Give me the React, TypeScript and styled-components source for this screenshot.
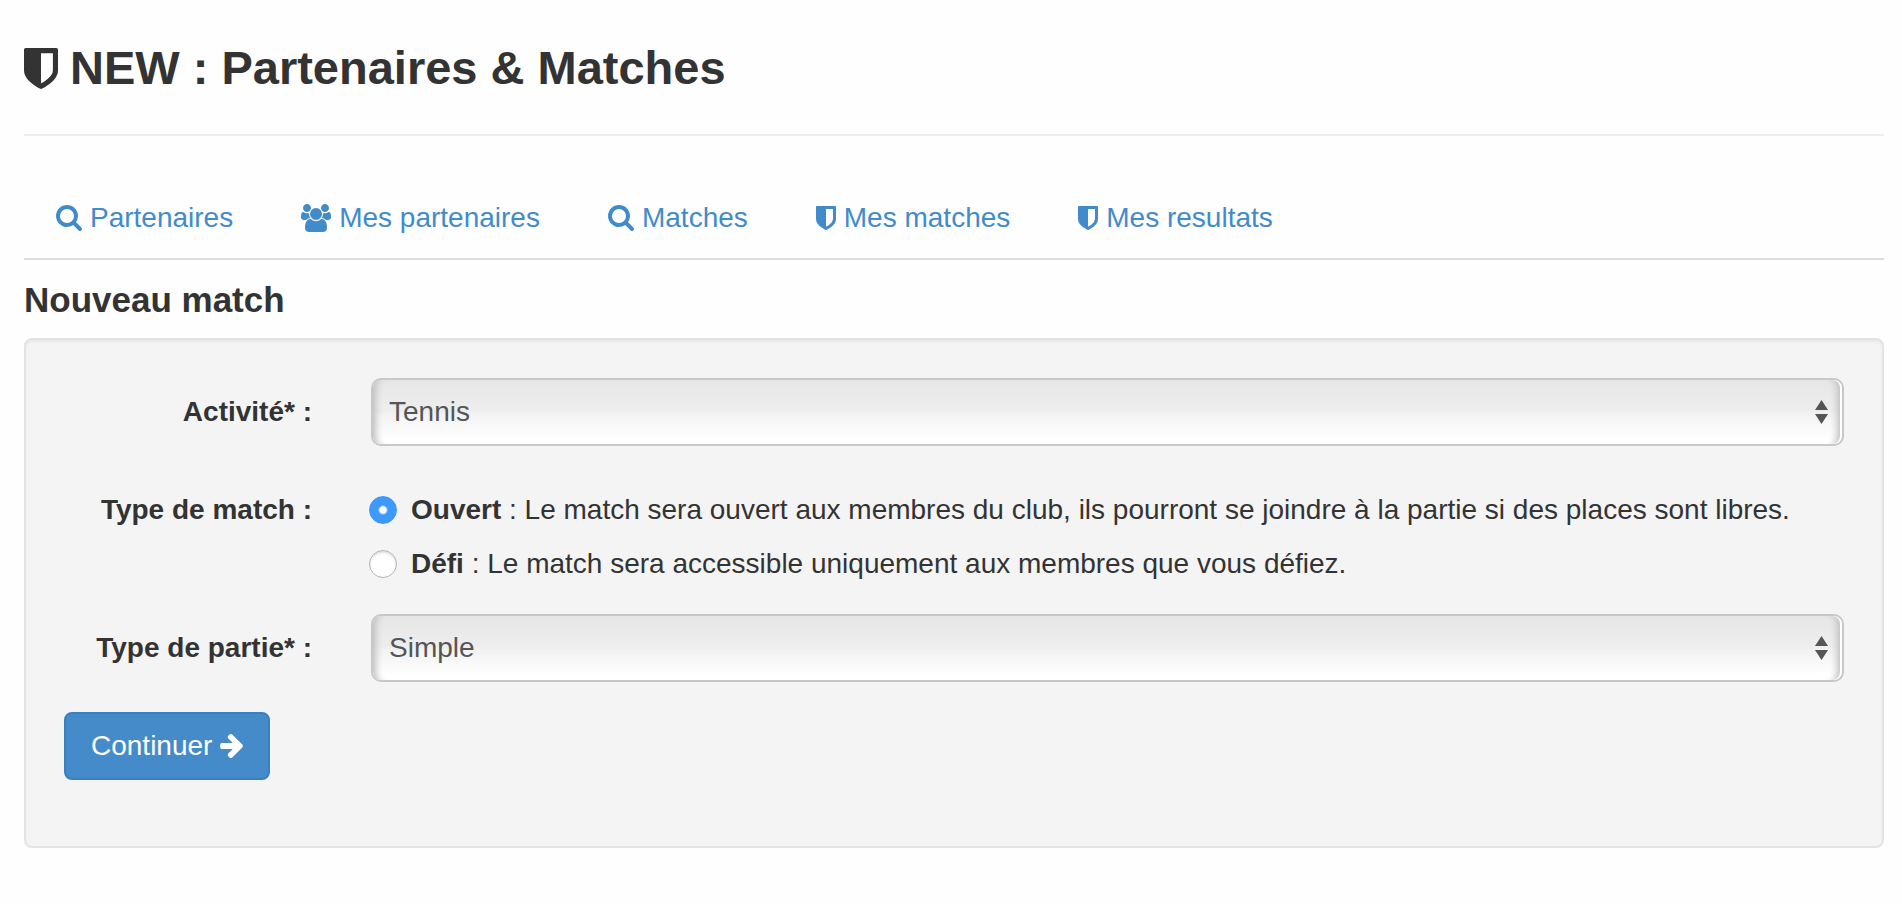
import React, { useState } from 'react';
import styled, { createGlobalStyle } from 'styled-components';

const GlobalStyle = createGlobalStyle`
  *, *::before, *::after { box-sizing: border-box; }
  body {
    margin: 0;
    background: #fefefe;
    color: #333;
    font-family: "Helvetica Neue", "Liberation Sans", Arial, sans-serif;
    font-size: 28px;
    line-height: 40px;
  }
`;

const Page = styled.main`
  padding: 40px 18px 56px 24px;
`;

const PageHeader = styled.header`
  padding-bottom: 38px;
  border-bottom: 2px solid #eee;
`;

const Title = styled.h1`
  display: flex;
  align-items: center;
  gap: 12px;
  margin: 0;
  font-size: 47px;
  font-weight: 700;
  line-height: 56px;
`;

const Tabs = styled.nav`
  display: flex;
  flex-wrap: wrap;
  gap: 4px;
  margin-top: 40px;
  border-bottom: 2px solid #ddd;
`;

const TabLink = styled.a`
  display: flex;
  align-items: center;
  gap: 8px;
  padding: 22px 32px 20px;
  color: #428bca;
  text-decoration: none;
`;

const Icon = styled.svg<{ $w: number; $h: number }>`
  flex: none;
  display: block;
  width: ${(p) => p.$w}px;
  height: ${(p) => p.$h}px;
  fill: currentColor;
`;

const SectionTitle = styled.h2`
  margin: 20px 0 18px;
  font-size: 35px;
  font-weight: 700;
  line-height: 40px;
`;

const Well = styled.form`
  padding: 38px 38px 66px;
  border: 2px solid #e3e3e3;
  border-radius: 8px;
  background: #f4f4f4;
  box-shadow: inset 0 2px 2px rgba(0, 0, 0, 0.05);
`;

const Row = styled.div`
  display: grid;
  grid-template-columns: 248px minmax(0, 1fr);
  column-gap: 59px;
  align-items: start;
  margin-bottom: 30px;
`;

const RowLabel = styled.label`
  padding: 14px 0;
  text-align: right;
  font-weight: 700;
`;

const RadioGroup = styled.div`
  display: flex;
  flex-direction: column;
  gap: 14px;
  margin-left: -2px;
  padding-top: 14px;
`;

const SelectFrame = styled.div`
  position: relative;
  height: 68px;
  padding-right: 2px;
  border: 2px solid #c8c8c8;
  border-radius: 10px;
  background: #fff;
`;

const SelectBox = styled.select`
  display: block;
  width: 100%;
  height: 100%;
  padding: 0 48px 0 16px;
  border: 0;
  border-radius: 8px;
  appearance: none;
  background: linear-gradient(#e6e6e6, #eee 50%, #f2f2f2 52%, #fff 92%);
  box-shadow: inset 10px 0 7px -7px #c0c0c0, inset -10px 0 7px -7px #c0c0c0;
  color: #555;
  font: inherit;
`;

const SelectArrows = styled.svg`
  position: absolute;
  top: 20px;
  right: 14px;
  width: 13px;
  height: 24px;
  fill: #555;
  pointer-events: none;
`;

const Option = styled.label`
  display: flex;
  align-items: center;
  gap: 14px;
`;

const Radio = styled.input`
  flex: none;
  width: 28px;
  height: 28px;
  margin: 0;
  appearance: none;
  border: 1px solid #b4b4b4;
  border-radius: 50%;
  background: #fff;
  box-shadow: inset 0 2px 2px rgba(0, 0, 0, 0.12);

  &:checked {
    border-color: #3b99fc;
    background: radial-gradient(circle, #fff 3px, #3f99fb 5px);
    box-shadow: none;
  }
`;

const SubmitButton = styled.button`
  display: flex;
  align-items: center;
  gap: 8px;
  height: 68px;
  padding: 0 25px;
  border: 2px solid #3a80be;
  border-radius: 8px;
  background: #458bc9;
  color: #fff;
  font: inherit;
`;

const SearchIcon = () => (
  <Icon $w={26} $h={26} viewBox="64 128 1664 1664" aria-hidden="true">
    <path d="M1216 832q0-185-131.5-316.5t-316.5-131.5-316.5 131.5-131.5 316.5 131.5 316.5 316.5 131.5 316.5-131.5 131.5-316.5zm512 832q0 52-38 90t-90 38q-54 0-90-38l-343-342q-179 124-399 124-143 0-273.5-55.5t-225-150-150-225-55.5-273.5 55.5-273.5 150-225 225-150 273.5-55.5 273.5 55.5 225 150 150 225 55.5 273.5q0 220-124 399l343 343q37 37 37 90z" />
  </Icon>
);

const ShieldIcon = ({ w = 20, h = 24 }: { w?: number; h?: number }) => (
  <Icon $w={w} $h={h} viewBox="256 128 1280 1536" aria-hidden="true">
    <path d="M1344 960v-640h-448v1137q119-63 213-137 235-184 235-360zm192-768v768q0 86-33.5 170.5t-83 150-118 127.5-126.5 103-121 77.5-89.5 49.5-42.5 20q-12 6-26 6t-26-6q-16-7-42.5-20t-89.5-49.5-121-77.5-126.5-103-118-127.5-83-150-33.5-170.5v-768q0-26 19-45t45-19h1152q26 0 45 19t19 45z" />
  </Icon>
);

const UsersIcon = () => (
  <Icon $w={30} $h={28} viewBox="0 0 1920 1792" aria-hidden="true">
    <path d="M593 896q-162 5-265 128H194q-82 0-138-40.5T0 865q0-353 124-353 6 0 43.5 21t97.5 42.5T384 597q67 0 133-23-5 37-5 66 0 139 81 256zm1071 637q0 120-73 189.5t-194 69.5H523q-121 0-194-69.5T256 1533q0-53 3.5-103.5t14-109T300 1212t43-97.5 62-81 85.5-53.5T602 960q10 0 43 21.5t73 48 107 48 135 21.5 135-21.5 107-48 73-48 43-21.5q61 0 111.5 20t85.5 53.5 62 81 43 97.5 26.5 108.5 14 109 3.5 103.5zM640 256q0 106-75 181t-181 75-181-75-75-181 75-181T384 0t181 75 75 181zm704 384q0 159-112.5 271.5T960 1024 688.5 911.5 576 640t112.5-271.5T960 256t271.5 112.5T1344 640zm576 225q0 78-56 118.5t-138 40.5h-134q-103-123-265-128 81-117 81-256 0-29-5-66 66 23 133 23 59 0 119-21.5t97.5-42.5 43.5-21q124 0 124 353zm-128-609q0 106-75 181t-181 75-181-75-75-181 75-181 181-75 181 75 75 181z" />
  </Icon>
);

const ArrowRightIcon = () => (
  <Icon $w={23} $h={24} viewBox="192 181 1472 1558" aria-hidden="true">
    <path d="M1664 960q0 54-37 91l-651 651q-39 37-91 37-51 0-90-37l-75-75q-38-38-38-91t38-91l293-293H309q-52 0-84.5-37.5T192 1024V896q0-53 32.5-90.5T309 768h704L720 474q-38-36-38-90t38-90l75-75q38-38 90-38 53 0 91 38l651 651q37 35 37 90z" />
  </Icon>
);

const tabs = [
  { label: 'Partenaires', icon: <SearchIcon /> },
  { label: 'Mes partenaires', icon: <UsersIcon /> },
  { label: 'Matches', icon: <SearchIcon /> },
  { label: 'Mes matches', icon: <ShieldIcon /> },
  { label: 'Mes resultats', icon: <ShieldIcon /> },
];

const matchTypes = [
  {
    value: 'ouvert',
    name: 'Ouvert',
    text: 'Le match sera ouvert aux membres du club, ils pourront se joindre à la partie si des places sont libres.',
  },
  {
    value: 'defi',
    name: 'Défi',
    text: 'Le match sera accessible uniquement aux membres que vous défiez.',
  },
];

const SelectRow = ({ id, label, options }: { id: string; label: string; options: string[] }) => (
  <Row>
    <RowLabel htmlFor={id}>{label}</RowLabel>
    <SelectFrame>
      <SelectBox id={id} name={id}>
        {options.map((o) => (
          <option key={o}>{o}</option>
        ))}
      </SelectBox>
      <SelectArrows viewBox="0 0 13 24" aria-hidden="true">
        <path d="M6.500 0L13 10H0zM0 14h13L6.500 24z" />
      </SelectArrows>
    </SelectFrame>
  </Row>
);

export default function App() {
  const [matchType, setMatchType] = useState('ouvert');

  return (
    <>
      <GlobalStyle />
      <Page>
        <PageHeader>
          <Title>
            <ShieldIcon w={34} h={41} />
            NEW : Partenaires &amp; Matches
          </Title>
        </PageHeader>
        <Tabs>
          {tabs.map((t) => (
            <TabLink key={t.label} href="#">
              {t.icon}
              {t.label}
            </TabLink>
          ))}
        </Tabs>
        <SectionTitle>Nouveau match</SectionTitle>
        <Well onSubmit={(e) => e.preventDefault()}>
          <SelectRow id="activite" label="Activité* :" options={['Tennis']} />
          <Row role="radiogroup" aria-labelledby="type-match">
            <RowLabel as="div" id="type-match">Type de match :</RowLabel>
            <RadioGroup>
              {matchTypes.map((m) => (
                <Option key={m.value}>
                  <Radio
                    type="radio"
                    name="type-match"
                    value={m.value}
                    checked={matchType === m.value}
                    onChange={() => setMatchType(m.value)}
                  />
                  <span>
                    <strong>{m.name}</strong> : {m.text}
                  </span>
                </Option>
              ))}
            </RadioGroup>
          </Row>
          <SelectRow id="type-partie" label="Type de partie* :" options={['Simple', 'Double']} />
          <SubmitButton type="submit">
            Continuer
            <ArrowRightIcon />
          </SubmitButton>
        </Well>
      </Page>
    </>
  );
}
